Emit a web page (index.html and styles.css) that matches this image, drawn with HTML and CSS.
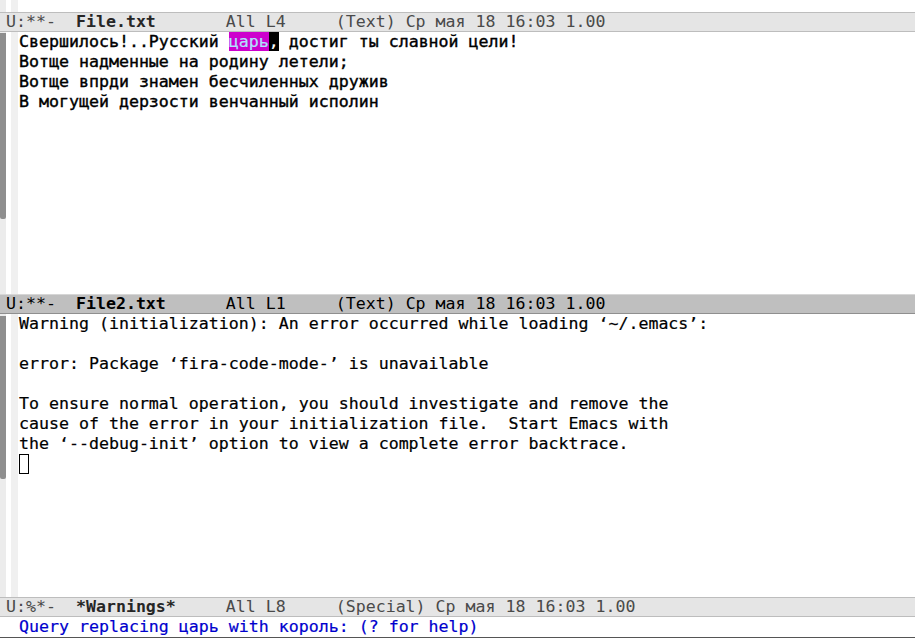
FILE: index.html
```html
<!DOCTYPE html>
<html>
<head>
<meta charset="utf-8">
<link rel="stylesheet" href="styles.css">
</head>
<body>
<div class="frame">
  <div class="win win-top">
    <div class="sbar"></div>
    <div class="gap"></div>
    <div class="fringe"></div>
    <div class="body"></div>
  </div>
  <div class="modeline inactive"><span class="ml">U:**-  <b>File.txt</b>       All L4     (Text) Ср мая 18 16:03 1.00</span></div>
  <div class="win win-mid">
    <div class="sbar"><div class="thumb thumb-mid"></div></div>
    <div class="gap"></div>
    <div class="fringe"></div>
    <div class="body heavy"><div class="line">Свершилось!..Русский <span class="isearch">царь</span><span class="cursor">,</span> достиг ты славной цели!</div><div class="line">Вотще надменные на родину летели;</div><div class="line">Вотще впрди знамен бесчиленных дружив</div><div class="line">В могущей дерзости венчанный исполин</div></div>
  </div>
  <div class="modeline active"><span class="ml">U:**-  <b>File2.txt</b>      All L1     (Text) Ср мая 18 16:03 1.00</span></div>
  <div class="win win-bot">
    <div class="sbar"><div class="thumb thumb-bot"></div></div>
    <div class="gap"></div>
    <div class="fringe"></div>
    <div class="body"><div class="line">Warning (initialization): An error occurred while loading ‘~/.emacs’:</div><div class="line"> </div><div class="line">error: Package ‘fira-code-mode-’ is unavailable</div><div class="line"> </div><div class="line">To ensure normal operation, you should investigate and remove the</div><div class="line">cause of the error in your initialization file.  Start Emacs with</div><div class="line">the ‘--debug-init’ option to view a complete error backtrace.</div><div class="line"><span class="hollow"> </span></div></div>
  </div>
  <div class="modeline inactive"><span class="ml">U:%*-  <b>*Warnings*</b>     All L8     (Special) Ср мая 18 16:03 1.00</span></div>
  <div class="minibuf"><span class="prompt">Query replacing царь with король: (? for help)</span></div>
</div>
</body>
</html>
```

FILE: styles.css
```css
html, body {
  margin: 0;
  padding: 0;
  background: #ffffff;
}

.frame {
  width: 915px;
  height: 638px;
  display: flex;
  flex-direction: column;
  overflow: hidden;
  font-family: "DejaVu Sans Mono", "Liberation Mono", monospace;
  font-size: 16.6px;
  line-height: 20px;
  color: #000;
}

.win {
  display: flex;
  flex-direction: row;
  background: #fff;
}

.win-top { height: 12px; }
.win-mid { height: 262px; }
.win-bot { height: 283px; }

.sbar {
  width: 6px;
  background: #ececec;
  display: flex;
  flex-direction: column;
}

.thumb {
  background: #8e8e8e;
  border-radius: 0 0 2px 2px;
}

.thumb-mid { margin-top: 1px; height: 186px; }
.thumb-bot { margin-top: 2px; height: 163px; }

.gap {
  width: 5px;
  background: #fff;
}

.fringe {
  width: 7px;
  background: #f0f0f0;
}

.body {
  flex: 1;
  padding-left: 1px;
  white-space: pre;
  -webkit-text-stroke: 0.2px #000;
}

.heavy {
  -webkit-text-stroke: 0.4px #000;
}

.line {
  height: 20px;
}

.isearch {
  background: #cd00cd;
  color: #b0e2ff;
  -webkit-text-stroke: 0.2px #b0e2ff;
}

.cursor {
  background: #000;
  color: #fff;
  -webkit-text-stroke: 0.2px #fff;
}

.hollow {
  display: inline-block;
  width: 8px;
  height: 18px;
  border: 1px solid #000;
  vertical-align: top;
}

.modeline {
  height: 18px;
  line-height: 18px;
  padding-left: 6px;
  white-space: pre;
}

.modeline b {
  font-weight: bold;
}

.inactive {
  background: #e5e5e5;
  color: #4a4a4a;
  border-top: 1px solid #bdbdbd;
  border-bottom: 1px solid #bdbdbd;
}

.inactive b {
  color: #262626;
}

.active {
  background: #bfbfbf;
  color: #000;
  border-top: 1px solid #d6d6d6;
  border-bottom: 1px solid #8f8f8f;
}

.minibuf {
  height: 20px;
  line-height: 20px;
  padding-left: 19px;
  white-space: pre;
  border-bottom: 1px solid #555;
}

.prompt {
  color: #0000cd;
  -webkit-text-stroke: 0.2px #0000cd;
}
```
